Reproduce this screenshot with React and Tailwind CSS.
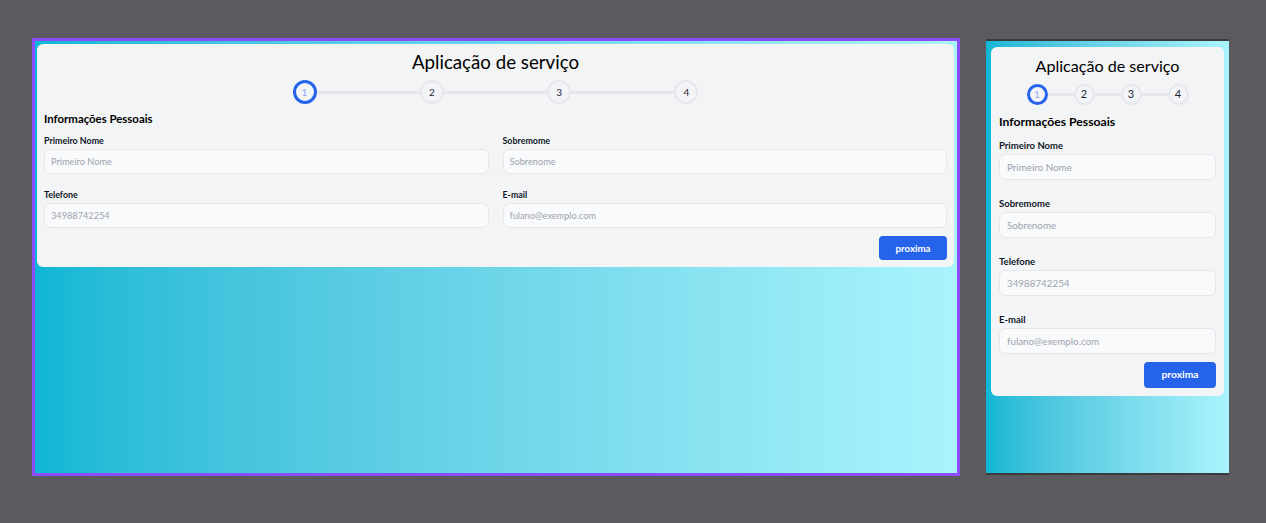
import React from "react";

const font = { fontFamily: "Lato, 'Noto Sans', sans-serif" };

function StepCircle({ n, active, mobile }) {
  if (active) {
    return (
      <div
        className={
          mobile
            ? "w-[21px] h-[21px] shrink-0 rounded-full border-[3px] border-[#2563eb] flex items-center justify-center text-[10px] text-[#93a8f4]"
            : "w-6 h-6 shrink-0 rounded-full border-[3px] border-[#2563eb] flex items-center justify-center text-[10px] text-[#93a8f4]"
        }
      >
        {n}
      </div>
    );
  }
  return (
    <div
      className={
        mobile
          ? "w-[21px] h-[21px] shrink-0 rounded-full border-2 border-[#e5e7eb] flex items-center justify-center text-[11px] text-gray-800"
          : "w-6 h-6 shrink-0 rounded-full border-2 border-[#e5e7eb] flex items-center justify-center text-[10px] text-gray-800"
      }
    >
      {n}
    </div>
  );
}

function Stepper({ mobile }) {
  const line = "flex-1 h-[3px] bg-[#e5e7eb]";
  return (
    <div
      className={
        mobile
          ? "w-[162px] mx-auto mt-[6px] flex items-center"
          : "w-[406px] mx-auto mt-1 flex items-center"
      }
    >
      <StepCircle n={1} active mobile={mobile} />
      <div className={line} />
      <StepCircle n={2} mobile={mobile} />
      <div className={line} />
      <StepCircle n={3} mobile={mobile} />
      <div className={line} />
      <StepCircle n={4} mobile={mobile} />
    </div>
  );
}

function Field({ label, placeholder, mobile }) {
  return (
    <div className="flex flex-col">
      <label
        className={
          mobile
            ? "text-[9.5px] leading-4 font-bold text-gray-900"
            : "text-[8.9px] leading-4 font-bold text-gray-900"
        }
      >
        {label}
      </label>
      <input
        className={
          mobile
            ? "h-[26px] w-full rounded-md border border-[#e5e7eb] bg-[#f9fafb] px-[7px] text-[9.8px] outline-none placeholder:text-[#9ca3af]"
            : "h-[25px] w-full rounded-md border border-[#e5e7eb] bg-[#f9fafb] px-[6px] text-[9.2px] outline-none placeholder:text-[#9ca3af]"
        }
        placeholder={placeholder}
      />
    </div>
  );
}

const fields = [
  { label: "Primeiro Nome", placeholder: "Primeiro Nome" },
  { label: "Sobremome", placeholder: "Sobrenome" },
  { label: "Telefone", placeholder: "34988742254" },
  { label: "E-mail", placeholder: "fulano@exemplo.com" },
];

function FormCard({ mobile }) {
  return (
    <div
      className={
        mobile
          ? "mx-[5px] mt-[6px] rounded-md bg-[#f3f4f6] px-2 pt-[7px] pb-2"
          : "ml-[2px] mt-[3px] w-[917px] rounded-md bg-[#f3f4f6] px-[7px] pt-1 pb-[7px]"
      }
    >
      <h1
        className={
          mobile
            ? "text-center text-[16.1px] leading-6 text-black"
            : "text-center text-[18.7px] leading-7 text-black"
        }
      >
        Aplicação de serviço
      </h1>
      <Stepper mobile={mobile} />
      <h2
        className={
          mobile
            ? "mt-[7px] text-[12.2px] leading-5 font-bold text-black"
            : "mt-[5px] text-[11.4px] leading-5 font-bold text-black"
        }
      >
        Informações Pessoais
      </h2>
      <div
        className={
          mobile
            ? "mt-[6px] grid grid-cols-1 gap-y-4"
            : "mt-1 grid grid-cols-2 gap-x-[14px] gap-y-[13px]"
        }
      >
        {fields.map((f) => (
          <Field key={f.label} label={f.label} placeholder={f.placeholder} mobile={mobile} />
        ))}
      </div>
      <div className="mt-2 flex justify-end">
        <button
          type="button"
          className={
            mobile
              ? "h-[26px] w-[72px] rounded-[4px] bg-[#2563eb] text-[10.3px] font-bold text-white"
              : "h-6 w-[68px] rounded-[4px] bg-[#2563eb] text-[9.7px] font-bold text-white"
          }
        >
          proxima
        </button>
      </div>
    </div>
  );
}

export default function App() {
  return (
    <div className="w-[1266px] h-[523px] bg-[#5b5a5f] flex items-start pl-[32px] pt-[38px]" style={font}>
      <div className="w-[928px] h-[438px] border-[3px] border-[#8b4dfa] bg-gradient-to-r from-[#0bb7d5] to-[#a9f4fc]">
        <FormCard />
      </div>
      <div className="ml-[26px] mt-px w-[243px] h-[436px] border-y-2 border-[#3b3b3e] bg-gradient-to-r from-[#0bb7d5] to-[#a9f4fc]">
        <FormCard mobile />
      </div>
    </div>
  );
}
